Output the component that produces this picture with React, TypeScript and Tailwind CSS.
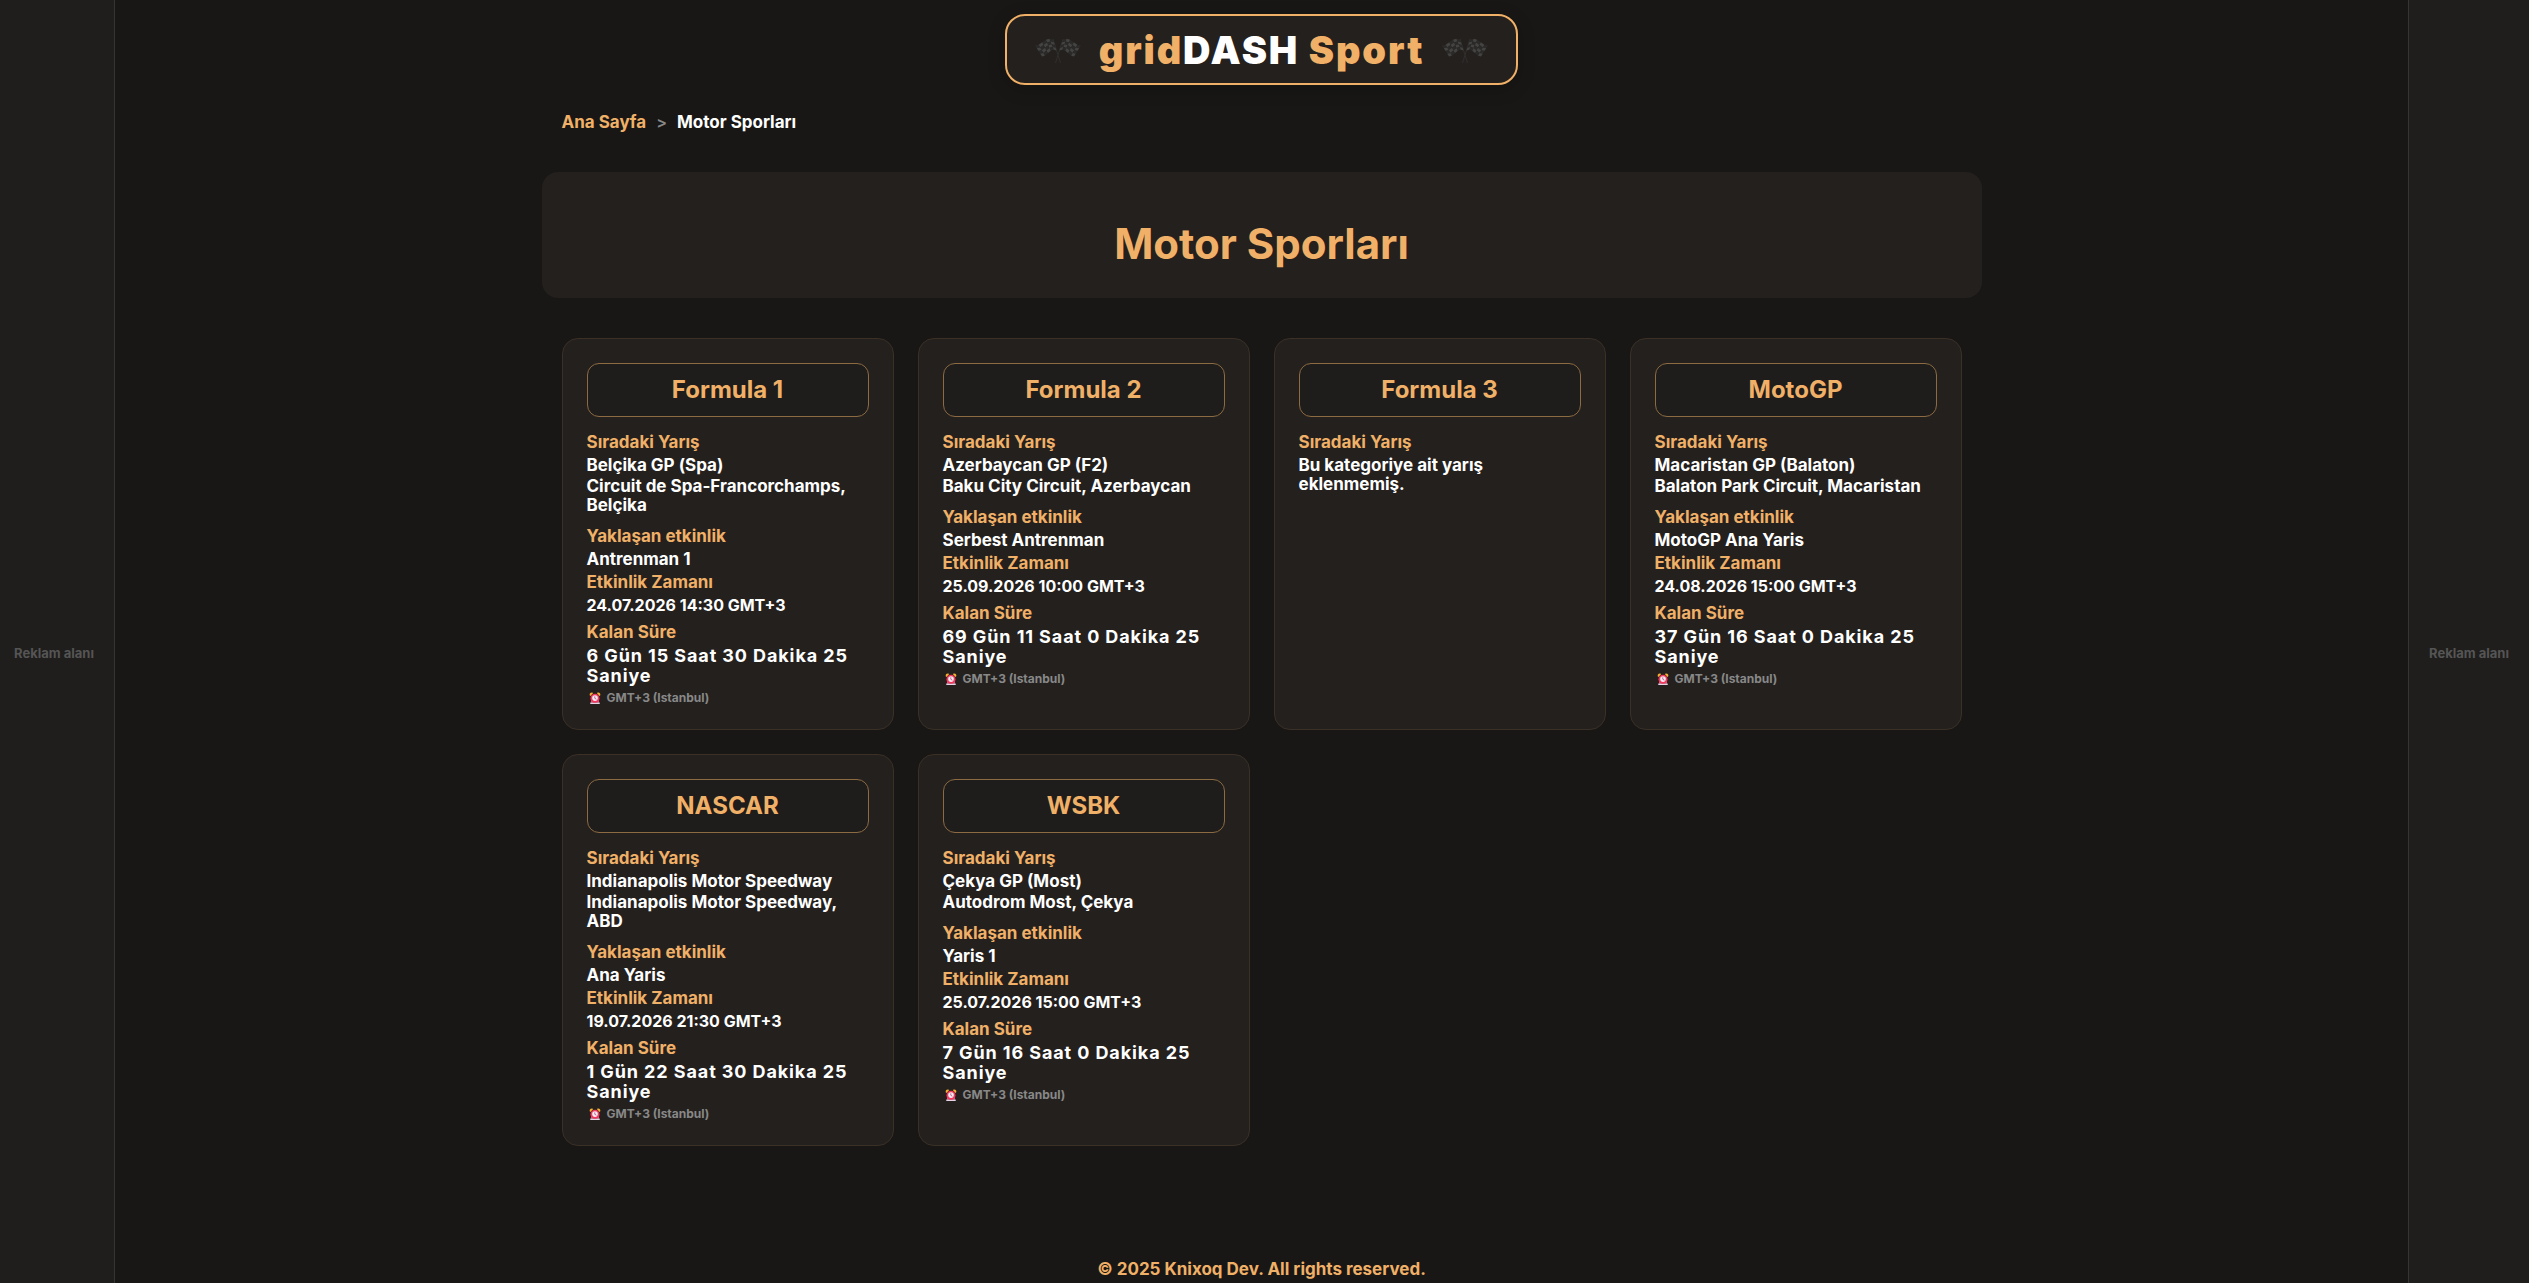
type Race = {
  category: string;
  name: string;
  circuit?: string;
  session?: string;
  date?: string;
  remaining?: string;
};

const races: Race[] = [
  {
    category: 'Formula 1',
    name: 'Belçika GP (Spa)',
    circuit: 'Circuit de Spa-Francorchamps, Belçika',
    session: 'Antrenman 1',
    date: '24.07.2026 14:30 GMT+3',
    remaining: '6 Gün 15 Saat 30 Dakika 25 Saniye',
  },
  {
    category: 'Formula 2',
    name: 'Azerbaycan GP (F2)',
    circuit: 'Baku City Circuit, Azerbaycan',
    session: 'Serbest Antrenman',
    date: '25.09.2026 10:00 GMT+3',
    remaining: '69 Gün 11 Saat 0 Dakika 25 Saniye',
  },
  { category: 'Formula 3', name: 'Bu kategoriye ait yarış eklenmemiş.' },
  {
    category: 'MotoGP',
    name: 'Macaristan GP (Balaton)',
    circuit: 'Balaton Park Circuit, Macaristan',
    session: 'MotoGP Ana Yaris',
    date: '24.08.2026 15:00 GMT+3',
    remaining: '37 Gün 16 Saat 0 Dakika 25 Saniye',
  },
  {
    category: 'NASCAR',
    name: 'Indianapolis Motor Speedway',
    circuit: 'Indianapolis Motor Speedway, ABD',
    session: 'Ana Yaris',
    date: '19.07.2026 21:30 GMT+3',
    remaining: '1 Gün 22 Saat 30 Dakika 25 Saniye',
  },
  {
    category: 'WSBK',
    name: 'Çekya GP (Most)',
    circuit: 'Autodrom Most, Çekya',
    session: 'Yaris 1',
    date: '25.07.2026 15:00 GMT+3',
    remaining: '7 Gün 16 Saat 0 Dakika 25 Saniye',
  },
];

const FLAG_COLUMNS = 5;
const FLAG_ROWS = 4;

/* A point on the waving cloth: u runs from the pole to the free edge, v from top to bottom. */
function clothPoint(u: number, v: number) {
  const wave = Math.sin(u * Math.PI * 1.7) * 1.8;
  const x = (1 - u) * (18 + 3.5 * v) + u * (7 * v);
  const y = (1 - u) * (2.5 + 11 * v) + u * (7 + 11 * v) - wave;
  return `${x.toFixed(2)},${y.toFixed(2)}`;
}

function FlagHalf() {
  const cells = [];
  for (let c = 0; c < FLAG_COLUMNS; c++) {
    for (let r = 0; r < FLAG_ROWS; r++) {
      const u0 = c / FLAG_COLUMNS;
      const u1 = (c + 1) / FLAG_COLUMNS;
      const v0 = r / FLAG_ROWS;
      const v1 = (r + 1) / FLAG_ROWS;
      cells.push(
        <polygon
          key={`${c}-${r}`}
          points={[clothPoint(u0, v0), clothPoint(u1, v0), clothPoint(u1, v1), clothPoint(u0, v1)].join(' ')}
          fill={(c + r) % 2 === 0 ? '#2b2a29' : '#434342'}
        />,
      );
    }
  }
  return (
    <g>
      <path d="M18 2 25.500 26" stroke="#302f2e" strokeWidth="1" />
      {cells}
    </g>
  );
}

function CrossedFlags() {
  return (
    <svg width="46" height="26" viewBox="0 0 46 26" fill="none" aria-hidden="true">
      <FlagHalf />
      <g transform="matrix(-1 0 0 1 46 0)">
        <FlagHalf />
      </g>
    </svg>
  );
}

function AlarmClock() {
  return (
    <svg width="12" height="12" viewBox="0 0 12 12" aria-hidden="true">
      <path d="M0.700 3.200A2.300 2.300 0 0 1 4.300 0.900L3 2.200 1.800 3.900Z" fill="#f9b233" />
      <path d="M11.300 3.200A2.300 2.300 0 0 0 7.700 0.900L9 2.200 10.200 3.900Z" fill="#f9b233" />
      <path d="M2 7.500H10V10.500H2Z" fill="#f2507a" />
      <rect x="1.200" y="10.400" width="9.600" height="1.600" rx="0.400" fill="#e6d3e6" />
      <circle cx="6" cy="6.200" r="4.500" fill="#f2385f" />
      <circle cx="6" cy="6.100" r="2.800" fill="#f7ecf3" />
      <path d="M5.800 4.300V6.300L7.400 7.200" stroke="#a0507a" strokeWidth="0.800" fill="none" />
    </svg>
  );
}

function RaceCard({ race }: { race: Race }) {
  return (
    <article className="rounded-2xl border border-[#3a3026] bg-[#24201e] p-6 text-[17px] leading-[19px] font-bold text-white">
      <h2 className="mb-4 flex h-[54px] items-center justify-center rounded-xl border border-[#8d6b42] bg-[#1e1d1b] text-2xl text-[#f0b067]">
        {race.category}
      </h2>
      <h3 className="mb-1 text-[#f0b067]">Sıradaki Yarış</h3>
      <p className="mb-0.5">{race.name}</p>
      {race.circuit && (
        <>
          <p className="mb-3">{race.circuit}</p>
          <h3 className="mb-1 text-[#f0b067]">Yaklaşan etkinlik</h3>
          <p className="mb-1">{race.session}</p>
          <h3 className="mb-1 text-[#f0b067]">Etkinlik Zamanı</h3>
          <p className="mb-2 text-base leading-[19px]">{race.date}</p>
          <h3 className="mb-1 text-[#f0b067]">Kalan Süre</h3>
          <p className="mb-1 text-lg leading-5 tracking-wider">{race.remaining}</p>
          <p className="flex items-center gap-1.5 pl-0.5 text-xs leading-[15px] text-[#888888]">
            <AlarmClock />
            GMT+3 (Istanbul)
          </p>
        </>
      )}
    </article>
  );
}

export default function App() {
  return (
    <div className="grid min-h-screen grid-cols-[115px_minmax(0,1fr)_121px] bg-[#181715] font-['Inter',sans-serif]">
      <aside className="flex items-center justify-center border-r border-[#363534] bg-[#1f1e1c] pt-6 pr-1.5 text-[13px] font-bold text-[#555555]">
        Reklam alanı
      </aside>

      <div className="mx-auto flex w-full max-w-[1440px] flex-col pt-3.5">
        <header className="mx-auto flex h-[71px] items-center gap-[18px] rounded-[20px] border-2 border-[#f0b067] bg-[#24201e] px-7 shadow-[0_4px_18px_rgba(0,0,0,0.2)]">
          <CrossedFlags />
          <a href="#" className="text-[38px] leading-10 font-black tracking-wider text-[#f0b067]">
            grid<span className="text-white">DASH</span> Sport
          </a>
          <CrossedFlags />
        </header>

        <nav aria-label="Konum" className="flex gap-2.5 px-5 pt-7 text-[17px] leading-[19px] font-bold">
          <a href="#" className="text-[#f0b067]">
            Ana Sayfa
          </a>
          <span className="text-base leading-[19px] font-semibold text-[#888888]">&gt;</span>
          <span className="text-white">Motor Sporları</span>
        </nav>

        <main className="flex flex-col gap-10 pt-10">
          <div className="rounded-2xl bg-[#24201e] pt-12 pb-[30px]">
            <h1 className="text-center text-[42px] leading-[48px] font-bold text-[#f0b067]">Motor Sporları</h1>
          </div>
          <section className="grid grid-cols-[repeat(auto-fill,minmax(320px,1fr))] gap-6 px-5">
            {races.map((race) => (
              <RaceCard key={race.category} race={race} />
            ))}
          </section>
        </main>

        <footer className="mt-auto pb-1 text-center text-[17px] leading-[19px] font-bold text-[#f0b067]">
          © 2025 Knixoq Dev. All rights reserved.
        </footer>
      </div>

      <aside className="flex items-center justify-center border-l border-[#363534] bg-[#1f1e1c] pt-6 text-[13px] font-bold text-[#555555]">
        Reklam alanı
      </aside>
    </div>
  );
}
